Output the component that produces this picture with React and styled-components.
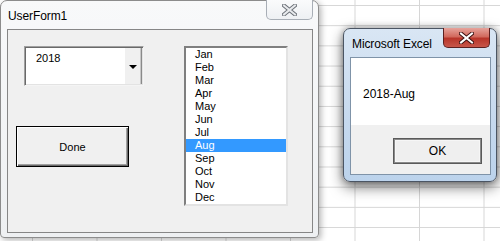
import React from "react";
import styled, {createGlobalStyle} from "styled-components";

const GlobalStyle = createGlobalStyle`
  html, body {
    margin: 0;
    padding: 0;
    background: #fff;
  }
  * {
    box-sizing: border-box;
  }
`;

const Desktop = styled.div`
  position: relative;
  width: 500px;
  height: 241px;
  overflow: hidden;
  font-family: "Liberation Sans", Arial, sans-serif;
  background-color: #fff;
  background-image: linear-gradient(to right, #d6d6d6 1px, transparent 1px),
    linear-gradient(to bottom, #d6d6d6 1px, transparent 1px);
  background-size: 64.5px 20.2px;
  background-position: 32px 5px;
`;

const UserForm = styled.div`
  position: absolute;
  left: 0;
  top: 0;
  width: 319px;
  height: 238px;
  display: flex;
  flex-direction: column;
  border: 1px solid #8c8c8c;
  border-radius: 7px 7px 4px 4px;
  background: linear-gradient(to bottom, #f8f9fa, #eef0f2);
  box-shadow: 2px 2px 6px rgba(0, 0, 0, 0.3);
`;

const TitleBar = styled.div`
  height: 28px;
  display: flex;
  justify-content: space-between;
  align-items: flex-start;
  padding-left: ${({$pad}) => $pad}px;
  padding-right: ${({$right}) => $right}px;
`;

const Title = styled.div`
  font-size: 12px;
  color: #000;
  padding-top: 8px;
  letter-spacing: -0.1px;
`;

const CloseButton = styled.div`
  width: 47px;
  height: 20px;
  margin-top: -1px;
  display: flex;
  align-items: center;
  justify-content: center;
  border: 1px solid ${({$active}) => ($active ? "#5c2020" : "#a8aeb6")};
  border-top: none;
  border-radius: 0 0 5px 5px;
  background: ${({$active}) => ($active
    ? "linear-gradient(to bottom, #e6a39b 0%, #d26a5e 45%, #b8352a 55%, #c7564a 100%)"
    : "linear-gradient(to bottom, #fafbfc, #eef0f3)")};
`;

const FormClient = styled.div`
  flex: 1;
  margin: 0 5px 4px 6px;
  border: 1px solid #868686;
  background: #f0f0f0;
  display: grid;
  grid-template-columns: 176px 104px;
  padding-top: 16px;
  font-size: 11px;
`;

const LeftColumn = styled.div`
  display: flex;
  flex-direction: column;
  align-items: flex-start;
  padding-left: 8px;
`;

const ComboBox = styled.div`
  width: 120px;
  height: 40px;
  margin-left: 8px;
  display: flex;
  background: #fff;
  border: 1px solid;
  border-color: #a0a0a0 #f4f4f4 #f4f4f4 #a0a0a0;
  box-shadow: inset 1px 1px 0 #696969, inset -1px -1px 0 #e3e3e3;
`;

const ComboText = styled.div`
  flex: 1;
  padding: 5px 0 0 11px;
  color: #000;
`;

const ComboArrow = styled.div`
  width: 18px;
  margin: 1px 1px 1px 0;
  display: flex;
  align-items: center;
  justify-content: center;
  background: #f0f0f0;
  border-left: 1px solid #fff;
  border-right: 1px solid #8a8a8a;
  box-shadow: inset -1px 0 0 #c8c8c8;
`;

const Triangle = styled.div`
  width: 0;
  height: 0;
  margin-top: 2px;
  border-left: 4px solid transparent;
  border-right: 4px solid transparent;
  border-top: 4px solid #000;
`;

const PushButton = styled.div`
  width: ${({$w}) => $w}px;
  height: ${({$h}) => $h}px;
  margin-top: ${({$top}) => $top || 0}px;
  display: flex;
  align-items: center;
  justify-content: center;
  background: #f0f0f0;
  color: #000;
  font-size: ${({$size}) => $size}px;
  border: 1px solid #000;
  box-shadow: inset 1px 1px 0 #fff, inset -1px -1px 0 #696969, inset -2px -2px 0 #a0a0a0;
`;

const ListBox = styled.div`
  width: 104px;
  height: 160px;
  display: flex;
  flex-direction: column;
  background: #fff;
  border: 2px solid;
  border-color: #7f7f7f #e3e3e3 #e3e3e3 #7f7f7f;
`;

const ListItem = styled.div`
  height: 13px;
  line-height: 13px;
  padding-left: 9px;
  color: ${({$selected}) => ($selected ? "#fff" : "#000")};
  background: ${({$selected}) => ($selected ? "#3399ff" : "transparent")};
`;

const MsgBox = styled.div`
  position: absolute;
  left: 343px;
  top: 28px;
  width: 154px;
  height: 154px;
  display: flex;
  flex-direction: column;
  border: 1px solid #4b5563;
  border-radius: 7px;
  background: linear-gradient(to bottom, #d9e6f4, #c6d9ee 60%, #bcd3ec);
  box-shadow: 0 5px 14px rgba(0, 0, 0, 0.55), 0 0 6px rgba(0, 0, 0, 0.3);
`;

const MsgClient = styled.div`
  flex: 1;
  margin: 0 5px 6px 6px;
  border: 1px solid #7f93a8;
  display: flex;
  flex-direction: column;
  background: #f0f0f0;
`;

const MsgBody = styled.div`
  height: 67px;
  background: #fff;
  padding: 29px 0 0 12px;
  font-size: 12px;
  color: #000;
`;

const MsgFooter = styled.div`
  flex: 1;
  display: flex;
  justify-content: flex-end;
  align-items: flex-start;
  padding: 13px 8px 0 0;
`;

const OkButton = styled.div`
  width: 89px;
  height: 26px;
  display: flex;
  align-items: center;
  justify-content: center;
  font-size: 12px;
  color: #000;
  background: #efefef;
  border: 1px solid #5a5a5a;
  box-shadow: inset 0 0 0 1px #8a8a8a, inset 0 0 0 2px #f6f6f6;
`;

function CrossIcon({active}) {
  return (
    <svg width="15" height="12" viewBox="0 0 15 12">
      <path d="M2 1.5 L13 10.5 M13 1.5 L2 10.5"
            stroke={active ? "#3b1010" : "#6b7077"} strokeWidth="4" strokeLinecap="square"/>
      <path d="M2 1.5 L13 10.5 M13 1.5 L2 10.5"
            stroke={active ? "#fff" : "#e8eaed"} strokeWidth="2" strokeLinecap="square"/>
    </svg>
  );
}

const months = ["Jan", "Feb", "Mar", "Apr", "May", "Jun", "Jul", "Aug", "Sep", "Oct", "Nov", "Dec"];

export default function App() {
  return (
    <>
      <GlobalStyle/>
      <Desktop>
        <UserForm>
          <TitleBar $pad={7} $right={5}>
            <Title>UserForm1</Title>
            <CloseButton>
              <CrossIcon/>
            </CloseButton>
          </TitleBar>
          <FormClient>
            <LeftColumn>
              <ComboBox>
                <ComboText>2018</ComboText>
                <ComboArrow>
                  <Triangle/>
                </ComboArrow>
              </ComboBox>
              <PushButton $w={113} $h={41} $top={40} $size={11}>Done</PushButton>
            </LeftColumn>
            <ListBox>
              {months.map(m => (
                <ListItem key={m} $selected={m === "Aug"}>{m}</ListItem>
              ))}
            </ListBox>
          </FormClient>
        </UserForm>

        <MsgBox>
          <TitleBar $pad={8} $right={6}>
            <Title>Microsoft Excel</Title>
            <CloseButton $active>
              <CrossIcon active/>
            </CloseButton>
          </TitleBar>
          <MsgClient>
            <MsgBody>2018-Aug</MsgBody>
            <MsgFooter>
              <OkButton>OK</OkButton>
            </MsgFooter>
          </MsgClient>
        </MsgBox>
      </Desktop>
    </>
  );
}
